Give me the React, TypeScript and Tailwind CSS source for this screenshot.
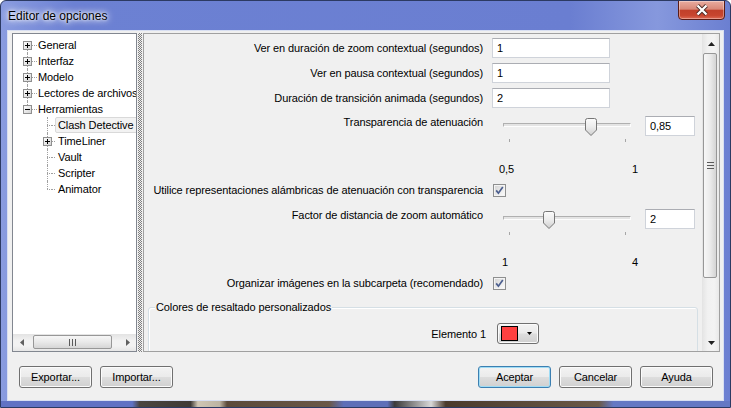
import React from "react";

const FONT = "font-['Liberation_Sans',Arial,sans-serif]";

function ExpandBox({ minus = false }: { minus?: boolean }) {
  return (
    <svg width="9" height="9" viewBox="0 0 9 9" className="relative block">
      <defs>
        <linearGradient id="ebx" x1="0" y1="0" x2="1" y2="1">
          <stop offset="0" stopColor="#ffffff" />
          <stop offset="1" stopColor="#d2d2d2" />
        </linearGradient>
      </defs>
      <rect x="0.5" y="0.5" width="8" height="8" fill="url(#ebx)" stroke="#8f8f8f" />
      <path d="M2 4.5h5" stroke="#000" />
      {!minus && <path d="M4.5 2v5" stroke="#000" />}
    </svg>
  );
}

type Item = {
  label: string;
  level: 0 | 1;
  box?: "plus" | "minus";
  vTop: boolean;
  vBottom: boolean;
  selected?: boolean;
};

const items: Item[] = [
  { label: "General", level: 0, box: "plus", vTop: false, vBottom: true },
  { label: "Interfaz", level: 0, box: "plus", vTop: true, vBottom: true },
  { label: "Modelo", level: 0, box: "plus", vTop: true, vBottom: true },
  { label: "Lectores de archivos", level: 0, box: "plus", vTop: true, vBottom: true },
  { label: "Herramientas", level: 0, box: "minus", vTop: true, vBottom: false },
  { label: "Clash Detective", level: 1, vTop: true, vBottom: true, selected: true },
  { label: "TimeLiner", level: 1, box: "plus", vTop: true, vBottom: true },
  { label: "Vault", level: 1, vTop: true, vBottom: true },
  { label: "Scripter", level: 1, vTop: true, vBottom: true },
  { label: "Animator", level: 1, vTop: true, vBottom: false },
];

function TreeRow({ item }: { item: Item }) {
  return (
    <div className="flex h-[16px] items-center whitespace-nowrap">
      <div className={item.level === 0 ? "w-[10px] shrink-0" : "w-[30px] shrink-0"} />
      <div className="relative flex h-[16px] w-[9px] shrink-0 items-center">
        {item.vTop && (
          <div className="absolute left-[4px] top-0 h-[8px] border-l border-dotted border-[#a0a0a0]" />
        )}
        {item.vBottom && (
          <div className="absolute left-[4px] top-[8px] h-[8px] border-l border-dotted border-[#a0a0a0]" />
        )}
        {item.box ? (
          <ExpandBox minus={item.box === "minus"} />
        ) : (
          <div className="absolute left-[4px] top-[8px] w-[5px] border-t border-dotted border-[#a0a0a0]" />
        )}
      </div>
      {item.level === 0 ? (
        <>
          <div className="mt-px h-0 w-[5px] shrink-0 border-t border-dotted border-[#a0a0a0]" />
          <span className="ml-[1px]">{item.label}</span>
        </>
      ) : (
        <>
          <div className="mt-px h-0 w-[3px] shrink-0 border-t border-dotted border-[#a0a0a0]" />
          <div
            className={
              item.selected
                ? "flex h-[16px] items-center rounded-[2px] border border-[#d9d9d9] bg-[#f2f2f2] pl-[2px] pr-[4px]"
                : "flex h-[16px] items-center border border-transparent pl-[2px] pr-[4px]"
            }
          >
            {item.label}
          </div>
        </>
      )}
    </div>
  );
}

function Arrow({ dir }: { dir: "up" | "down" | "left" | "right" }) {
  const paths: Record<string, string> = {
    up: "M0 4 L3.5 0 L7 4 Z",
    down: "M0 0 L7 0 L3.5 4 Z",
    left: "M4 0 L4 7 L0 3.5 Z",
    right: "M0 0 L4 3.5 L0 7 Z",
  };
  const horiz = dir === "up" || dir === "down";
  return (
    <svg
      width={horiz ? 7 : 4}
      height={horiz ? 4 : 7}
      viewBox={horiz ? "0 0 7 4" : "0 0 4 7"}
      className="block"
    >
      <path d={paths[dir]} fill={horiz ? "#202020" : "#606060"} />
    </svg>
  );
}

function HScroll() {
  return (
    <div className="flex h-[17px] shrink-0 bg-[image:linear-gradient(180deg,#e3e3e3_0%,#f2f2f2_40%,#f2f2f2_70%,#e6e6e6_100%)]">
      <div className="flex w-[17px] shrink-0 items-center justify-center">
        <Arrow dir="left" />
      </div>
      <div className="flex-1 pt-[1px]">
        <div className="ml-[3px] flex h-[14px] w-[79px] items-center justify-center rounded-[2px] border border-[#979797] bg-[image:linear-gradient(180deg,#f6f6f6_0%,#e9e9e9_50%,#d6d6d6_100%)]">
          <svg width="7" height="7" viewBox="0 0 7 7" className="block">
            <path d="M0.5 0v7M3.5 0v7M6.5 0v7" stroke="#5a5a5a" />
          </svg>
        </div>
      </div>
      <div className="flex w-[17px] shrink-0 items-center justify-center">
        <Arrow dir="right" />
      </div>
    </div>
  );
}

function VScroll() {
  return (
    <div className="flex w-[17px] shrink-0 flex-col border-l border-[#e4e4e4] bg-[image:linear-gradient(90deg,#e6e6e6_0%,#f1f1f1_30%,#f3f3f3_70%,#e9e9e9_100%)]">
      <div className="flex h-[17px] shrink-0 items-center justify-center pt-[2px]">
        <Arrow dir="up" />
      </div>
      <div className="flex-1 pl-[0px] pr-[2px] pt-[2px]">
        <div className="flex h-[225px] items-center justify-center rounded-[2px] border border-[#979797] bg-[image:linear-gradient(90deg,#f7f7f7_0%,#ebebeb_50%,#d4d4d4_100%)]">
          <svg width="7" height="7" viewBox="0 0 7 7" className="block">
            <path d="M0 0.5h7M0 3.5h7M0 6.5h7" stroke="#5a5a5a" />
          </svg>
        </div>
      </div>
      <div className="flex h-[17px] shrink-0 items-center justify-center">
        <Arrow dir="down" />
      </div>
    </div>
  );
}

function TextBox({ value, w }: { value: string; w: string }) {
  return (
    <div
      className={`${w} h-[20px] shrink-0 border border-[#cfd3da] border-t-[#abadb3] bg-white pl-[4px] leading-[18px]`}
    >
      {value}
    </div>
  );
}

function CheckBox() {
  return (
    <svg width="13" height="13" viewBox="0 0 13 13" className="block shrink-0">
      <defs>
        <linearGradient id="cbg" x1="0" y1="0" x2="1" y2="1">
          <stop offset="0" stopColor="#d6d6d6" />
          <stop offset="1" stopColor="#fafafa" />
        </linearGradient>
      </defs>
      <rect x="0.5" y="0.5" width="12" height="12" fill="#f4f4f4" stroke="#8e8f8f" />
      <rect x="2" y="2" width="9" height="9" fill="url(#cbg)" />
      <path d="M3.2 6.4 L5.4 9.2 L9.8 3" fill="none" stroke="#4c5f8f" strokeWidth="1.7" />
    </svg>
  );
}

function Thumb() {
  return (
    <svg width="12" height="18" viewBox="0 0 12 18" className="block">
      <defs>
        <linearGradient id="thg" x1="0" y1="0" x2="0" y2="1">
          <stop offset="0" stopColor="#fbfbfb" />
          <stop offset="0.5" stopColor="#ececec" />
          <stop offset="1" stopColor="#cfcfcf" />
        </linearGradient>
      </defs>
      <path
        d="M0.5 2.5 Q0.5 0.5 2.5 0.5 H9.5 Q11.5 0.5 11.5 2.5 V12 L6 17.5 L0.5 12 Z"
        fill="url(#thg)"
        stroke="#767676"
      />
    </svg>
  );
}

function Slider({
  thumbPos,
  min,
  max,
  labelPad,
}: {
  thumbPos: string;
  min: string;
  max: string;
  labelPad: string;
}) {
  return (
    <div className="w-[148px] shrink-0">
      <div className="relative h-[30px]">
        <div className="absolute left-[11px] top-[10px] h-[4px] w-[128px] border border-[#b0b0b0] border-b-[#fdfdfd] border-r-[#fdfdfd] bg-[#e4e4e4]" />
        <div className="absolute left-[17px] top-[26px] h-[3px] w-px bg-[#a6a6a6]" />
        <div className="absolute left-[133px] top-[26px] h-[3px] w-px bg-[#a6a6a6]" />
        <div className={`absolute top-[5px] ${thumbPos}`}>
          <Thumb />
        </div>
      </div>
      <div className={`mt-[19px] flex justify-between ${labelPad} pr-[2px] leading-[14px]`}>
        <span>{min}</span>
        <span>{max}</span>
      </div>
    </div>
  );
}

function Label({ children, extra = "" }: { children: React.ReactNode; extra?: string }) {
  return (
    <div className={`w-[339px] shrink-0 whitespace-nowrap text-right leading-[14px] ${extra}`}>
      {children}
    </div>
  );
}

function Btn({ children, def = false }: { children: React.ReactNode; def?: boolean }) {
  return (
    <button
      type="button"
      className={`flex h-[22px] w-[73px] items-center justify-center rounded-[3px] border bg-[image:linear-gradient(180deg,#f3f3f3_0%,#ebebeb_48%,#dddddd_52%,#d0d0d0_100%)] ${
        def
          ? "border-[#3c7fb1] shadow-[inset_0_0_0_1px_#9fdcf5]"
          : "border-[#707070] shadow-[inset_0_0_0_1px_#fbfbfb]"
      }`}
    >
      {children}
    </button>
  );
}

export default function App() {
  return (
    <div
      className={`${FONT} flex h-[408px] w-[731px] flex-col overflow-hidden rounded-t-[6px] border border-[#2c3a63] bg-[image:linear-gradient(90deg,#8a9ce0_0%,#6c81d3_10%,#6a7ed1_78%,#8698dd_90%,#6b7fd1_100%)] text-[11px] leading-[14px] text-black`}
    >
      {/* Title bar */}
      <div className="flex h-[29px] shrink-0 items-start justify-between">
        <div className="self-center pl-[7px] text-[12px] leading-[16px] [text-shadow:0_0_7px_#fff,0_0_9px_#fff,0_0_3px_#fff]">
          Editor de opciones
        </div>
        <button
          type="button"
          className="-mt-px mr-[5px] flex h-[20px] w-[47px] items-center justify-center rounded-b-[4px] border border-[#5a1c16] bg-[image:linear-gradient(180deg,#e9aca0_0%,#d98878_45%,#c1402b_52%,#c7452f_80%,#dd6a55_100%)] shadow-[inset_0_0_0_1px_rgba(255,255,255,0.35)]"
        >
          <svg width="14" height="12" viewBox="0 0 14 12" className="block">
            <path d="M2.5 1.5 L11.5 10.5 M11.5 1.5 L2.5 10.5" stroke="#4a2a26" strokeWidth="4" />
            <path d="M2.5 1.5 L11.5 10.5 M11.5 1.5 L2.5 10.5" stroke="#ffffff" strokeWidth="2.3" />
          </svg>
        </button>
      </div>

      {/* Client area */}
      <div className="mx-[6px] flex h-[371px] shrink-0 flex-col border border-[#d8dff2] bg-[#f0f0f0] tracking-[-0.1px]">
        <div className="mt-[2px] flex h-[319px] shrink-0 pl-[4px] pr-[3px]">
          {/* Tree */}
          <div className="flex h-full w-[125px] shrink-0 flex-col border border-[#828790] bg-white">
            <div className="flex-1 overflow-hidden pt-[3px]">
              {items.map((it) => (
                <TreeRow key={it.label} item={it} />
              ))}
            </div>
            <HScroll />
          </div>

          {/* Splitter */}
          <div className="flex w-[6px] shrink-0 justify-center">
            <div className="h-full w-[4px] bg-[image:repeating-conic-gradient(#808080_0%_25%,#f0f0f0_0%_50%)] bg-[length:2px_2px]" />
          </div>

          {/* Content panel */}
          <div className="flex h-full flex-1 border border-[#a0a0a0] bg-[#f0f0f0]">
            <div className="flex flex-1 flex-col overflow-hidden pt-[4px]">
              <div className="flex h-[20px] shrink-0 items-center">
                <Label>Ver en duración de zoom contextual (segundos)</Label>
                <div className="ml-[9px]">
                  <TextBox value="1" w="w-[118px]" />
                </div>
              </div>
              <div className="mt-[5px] flex h-[20px] shrink-0 items-center">
                <Label>Ver en pausa contextual (segundos)</Label>
                <div className="ml-[9px]">
                  <TextBox value="1" w="w-[118px]" />
                </div>
              </div>
              <div className="mt-[5px] flex h-[20px] shrink-0 items-center">
                <Label>Duración de transición animada (segundos)</Label>
                <div className="ml-[9px]">
                  <TextBox value="2" w="w-[118px]" />
                </div>
              </div>

              <div className="mt-[5px] flex h-[65px] shrink-0">
                <Label extra="pt-[2px]">Transparencia de atenuación</Label>
                <div className="ml-[9px] flex">
                  <Slider thumbPos="left-[93px]" min="0,5" max="1" labelPad="pl-[7px]" />
                  <div className="ml-[5px] mt-[3px]">
                    <TextBox value="0,85" w="w-[50px]" />
                  </div>
                </div>
              </div>

              <div className="flex h-[24px] shrink-0 items-center">
                <Label>Utilice representaciones alámbricas de atenuación con transparencia</Label>
                <div className="ml-[10px]">
                  <CheckBox />
                </div>
              </div>

              <div className="mt-[4px] flex h-[65px] shrink-0">
                <Label extra="pt-[2px]">Factor de distancia de zoom automático</Label>
                <div className="ml-[9px] flex">
                  <Slider thumbPos="left-[51px]" min="1" max="4" labelPad="pl-[10px]" />
                  <div className="ml-[5px] mt-[3px]">
                    <TextBox value="2" w="w-[50px]" />
                  </div>
                </div>
              </div>

              <div className="flex h-[24px] shrink-0 items-center">
                <Label>Organizar imágenes en la subcarpeta (recomendado)</Label>
                <div className="ml-[10px]">
                  <CheckBox />
                </div>
              </div>

              {/* Group box */}
              <div className="relative ml-[4px] mt-[12px] h-[60px] w-[550px] shrink-0 rounded-[3px] border border-[#d5dfe5] shadow-[inset_1px_1px_0_#ffffff]">
                <span className="absolute -top-[8px] left-[6px] whitespace-nowrap bg-[#f0f0f0] px-[1px] leading-[14px]">
                  Colores de resaltado personalizados
                </span>
                <div className="flex items-center pt-[15px]">
                  <div className="w-[337px] shrink-0 text-right">Elemento 1</div>
                  <div className="ml-[11px] flex h-[21px] w-[42px] items-center rounded-[3px] border border-[#707070] bg-[image:linear-gradient(180deg,#f3f3f3_0%,#ebebeb_48%,#dddddd_52%,#d0d0d0_100%)] pl-[3px] shadow-[inset_0_0_0_1px_#fbfbfb]">
                    <div className="h-[15px] w-[17px] border border-black bg-[#ff4040]" />
                    <svg width="5" height="3" viewBox="0 0 5 3" className="ml-auto mr-[6px] block">
                      <path d="M0 0 H5 L2.5 3 Z" fill="#000" />
                    </svg>
                  </div>
                </div>
              </div>
            </div>
            <VScroll />
          </div>
        </div>

        {/* Bottom buttons */}
        <div className="mt-[14px] flex shrink-0 justify-between pl-[11px] pr-[10px]">
          <div className="flex gap-[8px]">
            <Btn>Exportar...</Btn>
            <Btn>Importar...</Btn>
          </div>
          <div className="flex gap-[8px]">
            <Btn def>Aceptar</Btn>
            <Btn>Cancelar</Btn>
            <Btn>Ayuda</Btn>
          </div>
        </div>
      </div>

      {/* Bottom frame (glass showing desktop) */}
      <div className="h-[6px] shrink-0 bg-[image:linear-gradient(90deg,#6072c4_0%,#6072c4_18%,#4a4540_19%,#3e3a36_26%,#cfc6b4_27%,#bdb4a2_30%,#5b4a3a_31%,#6a5848_45%,#5e6fb8_47%,#5e6fb8_53%,#3b3a3a_54%,#d8d8d8_59%,#4a3a2c_61%,#6b5a48_82%,#6478c4_84%,#6478c4_100%)]" />
    </div>
  );
}
